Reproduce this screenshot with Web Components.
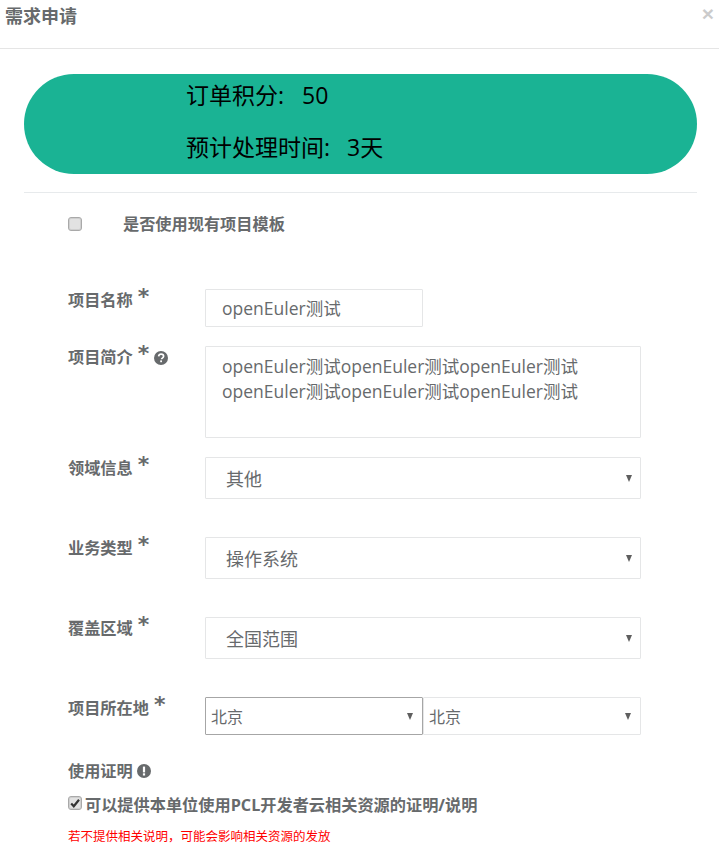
<!DOCTYPE html>
<html lang="zh">
<head>
<meta charset="utf-8">
<title>需求申请</title>
<style>
  html, body { margin: 0; background: #fff; }
  body { font-family: "Open Sans", "Noto Sans CJK SC", sans-serif; color: #676a6c; overflow: hidden; }
</style>
</head>
<body>
<request-modal heading="需求申请">
  <order-banner points="50" days="3天"></order-banner>
  <check-line class="template" label="是否使用现有项目模板"></check-line>

  <form-row label="项目名称" required style="height:57px">
    <text-box style="width:218px;height:38px">openEuler测试</text-box>
  </form-row>
  <form-row label="项目简介" required hint="question" style="height:111px">
    <text-box style="width:436px;height:92px;padding-top:7px">openEuler测试openEuler测试openEuler测试<br>openEuler测试openEuler测试openEuler测试</text-box>
  </form-row>
  <form-row label="领域信息" required style="height:80px">
    <select-box style="width:436px">其他</select-box>
  </form-row>
  <form-row label="业务类型" required style="height:80px">
    <select-box style="width:436px">操作系统</select-box>
  </form-row>
  <form-row label="覆盖区域" required style="height:80px">
    <select-box style="width:436px">全国范围</select-box>
  </form-row>
  <form-row label="项目所在地" required style="height:63px">
    <select-box compact focused style="width:218px">北京</select-box><select-box compact style="width:218px">北京</select-box>
  </form-row>

  <proof-block></proof-block>
</request-modal>

<script>
const QUESTION = '<svg viewBox="0 0 14 14" width="14" height="14"><circle cx="7" cy="7" r="7" fill="currentColor"/><path d="M4.6 5.4C4.8 4 5.8 3.2 7.1 3.2c1.5 0 2.5.9 2.5 2.1 0 1-.6 1.4-1.2 1.8-.6.4-.8.6-.8 1.2" fill="none" stroke="#fff" stroke-width="1.7"/><rect x="6.2" y="9.4" width="1.8" height="1.8" fill="#fff"/></svg>';
const ALERT = '<svg viewBox="0 0 14 14" width="14" height="14"><circle cx="7" cy="7" r="7" fill="currentColor"/><rect x="5.9" y="2.6" width="2.2" height="5.8" fill="#fff"/><rect x="5.9" y="9.3" width="2.2" height="2.2" fill="#fff"/></svg>';

class RequestModal extends HTMLElement {
  connectedCallback() {
    this.attachShadow({ mode: 'open' }).innerHTML = `
      <style>
        :host { display: block; width: 719px; height: 853px; overflow: hidden; }
        header { height: 48px; border-bottom: 1px solid #e5e5e5; display: flex; justify-content: space-between; align-items: flex-start; }
        h4 { margin: 4px 0 0 5px; font-size: 18px; line-height: 25px; font-weight: 700; color: #676a6c; }
        .close { margin: 2px 5px 0 0; font: 700 21px/24px "Liberation Sans", sans-serif; color: #000; opacity: .2; }
        main { padding: 25px 22px 0 24px; }
      </style>
      <header><h4>${this.getAttribute('heading')}</h4><span class="close">×</span></header>
      <main><slot></slot></main>`;
  }
}

class OrderBanner extends HTMLElement {
  connectedCallback() {
    this.attachShadow({ mode: 'open' }).innerHTML = `
      <style>
        :host { display: block; }
        .pill { height: 100px; box-sizing: border-box; border-radius: 50px; background: #1ab394; color: #000; font-size: 23px; line-height: 30px;
                display: flex; flex-direction: column; justify-content: center; gap: 22px; padding: 0 0 6px 162px; }
        .pill div { display: flex; }
        .pill b { font-weight: 400; margin-right: 18px; }
        .pill .eta b { margin-right: 17px; }
        hr { border: 0; border-top: 1px solid #e7eaec; margin: 18px 0 0; }
      </style>
      <div class="pill">
        <div><b>订单积分:</b>${this.getAttribute('points')}</div>
        <div class="eta"><b>预计处理时间:</b>${this.getAttribute('days')}</div>
      </div>
      <hr>`;
  }
}

class CheckBox extends HTMLElement {
  connectedCallback() {
    const tick = this.hasAttribute('checked')
      ? '<svg viewBox="0 0 14 14" width="14" height="14"><path d="M3.2 7.4 5.8 10.2 11 3.8" fill="none" stroke="#333" stroke-width="2.2"/></svg>' : '';
    this.attachShadow({ mode: 'open' }).innerHTML = `
      <style>
        :host { display: block; width: 14px; height: 14px; flex: none; }
        div { width: 14px; height: 14px; box-sizing: border-box; border: 1px solid #a9a9a9; border-radius: 3px; background: #e2e2e2;
              box-shadow: inset 0 0 0 1px #cfcfcf; position: relative; }
        svg { position: absolute; left: -1px; top: -1px; }
      </style>
      <div>${tick}</div>`;
  }
}

class CheckLine extends HTMLElement {
  connectedCallback() {
    this.attachShadow({ mode: 'open' }).innerHTML = `
      <style>
        :host { display: flex; align-items: center; height: 24px; margin: 19px 0 0 44px; padding-bottom: 53px; font-size: 16.2px; font-weight: 700; color: #676a6c; }
        span { margin-left: 41px; line-height: 24px; }
      </style>
      <check-box></check-box><span>${this.getAttribute('label')}</span>`;
  }
}

class FormRow extends HTMLElement {
  connectedCallback() {
    const hint = this.getAttribute('hint') === 'question' ? `<i>${QUESTION}</i>` : '';
    this.attachShadow({ mode: 'open' }).innerHTML = `
      <style>
        :host { display: flex; box-sizing: border-box; padding-left: 44px; }
        label { width: 137px; flex: none; display: flex; align-items: flex-start; font-size: 16.2px; line-height: 22px; font-weight: 700; color: #676a6c; }
        .star { margin-left: 5px; font: 700 22px/16px "DejaVu Sans", sans-serif; }
        i { margin: 5px 0 0 5px; display: block; line-height: 0; color: #676a6c; }
        .control { display: flex; align-items: flex-start; }
      </style>
      <label>${this.getAttribute('label')}<span class="star">*</span>${hint}</label>
      <div class="control"><slot></slot></div>`;
  }
}

class TextBox extends HTMLElement {
  connectedCallback() {
    this.attachShadow({ mode: 'open' }).innerHTML = `
      <style>
        :host { display: block; box-sizing: border-box; border: 1px solid #e5e6e7; border-radius: 1px; padding: 6px 16px; font-size: 17.5px; line-height: 25px; color: #676a6c; white-space: nowrap; }
      </style>
      <slot></slot>`;
  }
}

class SelectBox extends HTMLElement {
  connectedCallback() {
    const compact = this.hasAttribute('compact');
    this.attachShadow({ mode: 'open' }).innerHTML = `
      <style>
        :host { display: flex; box-sizing: border-box; height: ${compact ? 38 : 42}px; align-items: center; justify-content: space-between;
                border: 1px solid ${this.hasAttribute('focused') ? '#a6a6a6' : '#e5e6e7'}; border-radius: 1px;
                padding: 0 ${compact ? 9 : 8}px 0 ${compact ? 5 : 20}px; font-size: ${compact ? 16 : 18}px; color: #676a6c; }
        .arrow { width: 0; height: 0; border-left: 3.5px solid transparent; border-right: 3.5px solid transparent; border-top: 7px solid #5f5f5f; }
      </style>
      <span><slot></slot></span><span class="arrow"></span>`;
  }
}

class ProofBlock extends HTMLElement {
  connectedCallback() {
    this.attachShadow({ mode: 'open' }).innerHTML = `
      <style>
        :host { display: block; padding-left: 44px; color: #676a6c; font-size: 16.2px; line-height: 22px; }
        .title { display: flex; align-items: center; font-weight: 600; height: 22px; }
        .title i { margin-left: 4px; line-height: 0; display: block; }
        .agree { display: flex; align-items: center; font-weight: 700; height: 24px; margin-top: 11px; }
        .agree check-box { margin-top: -5px; }
        .agree span { margin-left: 3px; }
        .warn { color: #f00; font: 12.5px/18px "Noto Sans CJK SC", sans-serif; margin-top: 10px; }
      </style>
      <div class="title">使用证明<i>${ALERT}</i></div>
      <div class="agree"><check-box checked></check-box><span>可以提供本单位使用PCL开发者云相关资源的证明/说明</span></div>
      <div class="warn">若不提供相关说明&#xFF0C;可能会影响相关资源的发放</div>`;
  }
}

customElements.define('check-box', CheckBox);
customElements.define('check-line', CheckLine);
customElements.define('order-banner', OrderBanner);
customElements.define('form-row', FormRow);
customElements.define('text-box', TextBox);
customElements.define('select-box', SelectBox);
customElements.define('proof-block', ProofBlock);
customElements.define('request-modal', RequestModal);
</script>
</body>
</html>
